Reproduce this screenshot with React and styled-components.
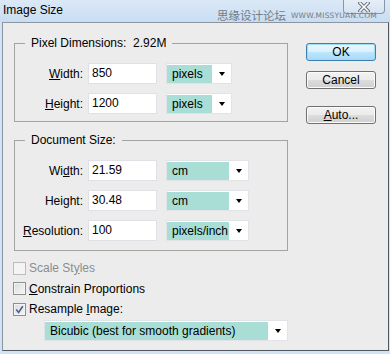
import React from 'react'
import styled, { createGlobalStyle } from 'styled-components'

const Global = createGlobalStyle`
  html, body { margin: 0; padding: 0; background: #cfe0f2; }
  body { font-family: "Liberation Sans", Arial, sans-serif; font-size: 12px; color: #000; }
`

const Frame = styled.div`
  position: relative;
  width: 390px;
  height: 354px;
  display: flex;
  flex-direction: column;
  background: #d3e3f4;
  overflow: hidden;
`

const TitleBar = styled.div`
  height: 22px;
  display: flex;
  align-items: flex-start;
  background: linear-gradient(#dbe9f7, #c9ddf2);
`

const Title = styled.div`
  padding: 3px 0 0 3px;
  font-size: 12px;
  line-height: 15px;
`

const CloseButton = styled.div`
  margin-left: auto;
  margin-right: 5px;
  width: 42px;
  height: 14px;
  display: flex;
  align-items: center;
  justify-content: center;
  box-sizing: border-box;
  border: 1px solid #8796a8;
  border-top: none;
  border-radius: 0 0 4px 4px;
  background: linear-gradient(#e6eef7, #d6e3f1);
`

const Watermark = styled.div`
  position: absolute;
  left: 217px;
  top: 8px;
  display: flex;
  align-items: center;
  gap: 5px;
  color: #747b85;
  pointer-events: none;
`

const WaterCn = styled.span`
  font-family: "Noto Sans CJK SC", sans-serif;
  font-size: 11.5px;
  line-height: 14px;
`

const WaterEn = styled.span`
  font-family: "DejaVu Sans", sans-serif;
  font-size: 7.5px;
  letter-spacing: 0.2px;
  margin-top: 1px;
`

const Body = styled.div`
  margin: 0 1px 3px 2px;
  flex: 1;
  display: flex;
  box-sizing: border-box;
  background: #ececec;
  border: 1px solid #8b96a2;
  border-right-color: #4f5861;
  border-bottom-color: #4f5861;
  padding: 13px 0 0 11px;
`

const MainCol = styled.div`
  width: 274px;
  display: flex;
  flex-direction: column;
`

const SideCol = styled.div`
  margin: 7px 0 0 18px;
  width: 70px;
  display: flex;
  flex-direction: column;
`

const Group = styled.fieldset`
  margin: ${p => p.$top || 0}px 0 0;
  padding: 13px 0 ${p => p.$bottom || 8}px;
  border: 1px solid #a3a3a3;
  min-width: 0;
  display: flex;
  flex-direction: column;
  gap: 9px;
`

const Legend = styled.legend`
  margin-left: 10px;
  padding: 0 6px;
  line-height: 14px;
  white-space: pre;
`

const Row = styled.div`
  display: flex;
  align-items: center;
  height: 21px;
  margin-top: ${p => p.$top || 0}px;
`

const Label = styled.label`
  width: 68px;
  margin-right: 5px;
  text-align: right;
  white-space: nowrap;
`

const Input = styled.div`
  width: 69px;
  height: 21px;
  box-sizing: border-box;
  border: 1px solid #dfe1e6;
  background: #fff;
  padding: 0 0 0 3px;
  line-height: 19px;
`

const Select = styled.div`
  margin-left: ${p => p.$gap ?? 9}px;
  width: ${p => p.$w}px;
  height: 21px;
  box-sizing: border-box;
  border: 1px solid #e2e3e8;
  background: #fff;
  display: flex;
  padding: 1px 0 0 0;
`

const SelectValue = styled.div`
  flex: 1;
  background: #a8ded6;
  padding-left: 5px;
  line-height: 18px;
  height: 18px;
  white-space: nowrap;
  overflow: hidden;
`

const ArrowBox = styled.div`
  width: 19px;
  display: flex;
  align-items: center;
  justify-content: center;

  &::after {
    content: "";
    border-left: 3.5px solid transparent;
    border-right: 3.5px solid transparent;
    border-top: 4px solid #000;
  }
`

const Checks = styled.div`
  margin: 7px 0 0 -1px;
  display: flex;
  flex-direction: column;
`

const CheckRow = styled.div`
  display: flex;
  align-items: center;
  height: ${p => p.$h || 20}px;
  color: ${p => (p.$disabled ? '#8d8d8d' : '#000')};
`

const Box = styled.div`
  width: 13px;
  height: 13px;
  box-sizing: border-box;
  margin-right: 3px;
  border: 1px solid ${p => (p.$disabled ? '#bcbcbc' : '#8e8f8f')};
  background: ${p =>
    p.$disabled
      ? '#f4f4f4'
      : 'linear-gradient(135deg, #dcdcdc, #f6f6f6)'};
  box-shadow: inset 0 0 0 1px #f4f4f4;
  display: flex;
  align-items: center;
  justify-content: center;
`

const Button = styled.div`
  height: 18px;
  margin-bottom: ${p => p.$after || 0}px;
  box-sizing: border-box;
  border: 1px solid ${p => (p.$primary ? '#3c7fb1' : '#707070')};
  border-radius: 3px;
  background: ${p =>
    p.$primary
      ? 'linear-gradient(#eaf6fd 0%, #d9f0fc 50%, #bee6fd 50%, #a7d9f5 100%)'
      : 'linear-gradient(#f2f2f2 0%, #ebebeb 50%, #dddddd 50%, #cfcfcf 100%)'};
  box-shadow: ${p => (p.$primary ? 'inset 0 0 0 1px #9fdcf7' : 'inset 0 0 0 1px #fbfbfb')};
  text-align: center;
  line-height: 16px;
`

const Check = () => (
  <svg width="9" height="9" viewBox="0 0 9 9">
    <path d="M1.2 4.6 L3.6 7.4 L7.8 1.2" fill="none" stroke="#4a5f97" strokeWidth="1.6" />
  </svg>
)

const CloseX = () => (
  <svg width="12" height="10" viewBox="0 0 12 10">
    <path d="M2 1 L10 9 M10 1 L2 9" stroke="#5f6b78" strokeWidth="3.4" strokeLinecap="square" />
    <path d="M2 1 L10 9 M10 1 L2 9" stroke="#fff" strokeWidth="1.6" strokeLinecap="square" />
  </svg>
)

const FieldRow = ({ label, value, unit, w }) => (
  <Row>
    <Label>{label}</Label>
    <Input>{value}</Input>
    <Select $w={w}>
      <SelectValue>{unit}</SelectValue>
      <ArrowBox />
    </Select>
  </Row>
)

export default function App() {
  return (
    <>
      <Global />
      <Frame>
        <TitleBar>
          <Title>Image Size</Title>
          <CloseButton>
            <CloseX />
          </CloseButton>
        </TitleBar>
        <Watermark>
          <WaterCn>思缘设计论坛</WaterCn>
          <WaterEn>WWW.MISSYUAN.COM</WaterEn>
        </Watermark>
        <Body>
          <MainCol>
            <Group $bottom={7}>
              <Legend>{'Pixel Dimensions:  2.92M'}</Legend>
              <FieldRow label={<><u>W</u>idth:</>} value="850" unit="pixels" w={66} />
              <FieldRow label={<><u>H</u>eight:</>} value="1200" unit="pixels" w={66} />
            </Group>
            <Group $top={11} $bottom={9}>
              <Legend>Document Size:</Legend>
              <FieldRow label={<>Wi<u>d</u>th:</>} value="21.59" unit="cm" w={83} />
              <FieldRow label={<>Hei<u>g</u>ht:</>} value="30.48" unit="cm" w={83} />
              <FieldRow label={<><u>R</u>esolution:</>} value="100" unit="pixels/inch" w={83} />
            </Group>
            <Checks>
              <CheckRow $disabled>
                <Box $disabled />
                <span>Scale St<u>y</u>les</span>
              </CheckRow>
              <CheckRow $h={21}>
                <Box />
                <span><u>C</u>onstrain Proportions</span>
              </CheckRow>
              <CheckRow>
                <Box>
                  <Check />
                </Box>
                <span>Resample <u>I</u>mage:</span>
              </CheckRow>
            </Checks>
            <Row $top={1}>
              <Select $w={246} $gap={30}>
                <SelectValue>Bicubic (best for smooth gradients)</SelectValue>
                <ArrowBox />
              </Select>
            </Row>
          </MainCol>
          <SideCol>
            <Button $primary $after={10}>OK</Button>
            <Button $after={17}>Cancel</Button>
            <Button><u>A</u>uto...</Button>
          </SideCol>
        </Body>
      </Frame>
    </>
  )
}
